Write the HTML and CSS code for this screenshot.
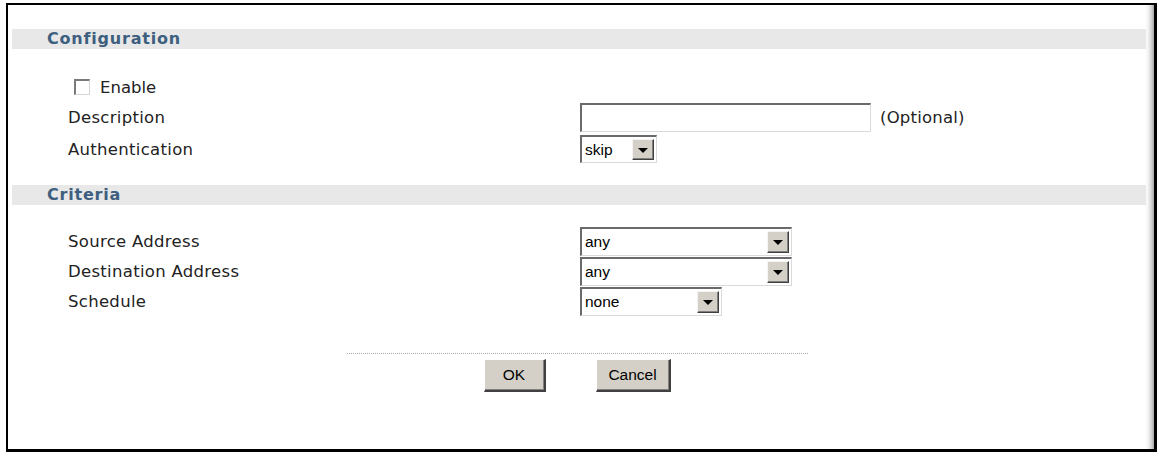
FILE: index.html
```html
<!DOCTYPE html>
<html lang="en">
<head>
<meta charset="utf-8">
<title>Configuration</title>
<link rel="stylesheet" href="styles.css">
</head>
<body>
<div class="frame">
  <div class="bar">Configuration</div>
  <div class="rows rows-config">
    <div class="row row-enable">
      <label class="check"><input type="checkbox" class="checkbox"><span>Enable</span></label>
    </div>
    <div class="row">
      <span class="label">Description</span>
      <div class="control">
        <input type="text" class="textbox">
        <span class="hint">(Optional)</span>
      </div>
    </div>
    <div class="row row-auth">
      <span class="label">Authentication</span>
      <div class="control">
        <div class="select select-skip"><span class="value">skip</span><span class="arrow"></span></div>
      </div>
    </div>
  </div>

  <div class="bar bar-criteria">Criteria</div>
  <div class="rows rows-criteria">
    <div class="row">
      <span class="label">Source Address</span>
      <div class="control">
        <div class="select select-wide"><span class="value">any</span><span class="arrow"></span></div>
      </div>
    </div>
    <div class="row">
      <span class="label">Destination Address</span>
      <div class="control">
        <div class="select select-wide"><span class="value">any</span><span class="arrow"></span></div>
      </div>
    </div>
    <div class="row">
      <span class="label">Schedule</span>
      <div class="control">
        <div class="select select-mid"><span class="value">none</span><span class="arrow"></span></div>
      </div>
    </div>
  </div>

  <div class="actions">
    <div class="divider"></div>
    <div class="buttons">
      <button class="btn btn-ok" type="button">OK</button>
      <button class="btn btn-cancel" type="button">Cancel</button>
    </div>
  </div>
</div>
</body>
</html>
```

FILE: styles.css
```css
* { box-sizing: border-box; }

html, body {
  margin: 0;
  padding: 0;
  background: #ffffff;
}

body {
  font-family: "DejaVu Sans", Verdana, sans-serif;
  font-size: 16.5px;
  color: #222222;
}

.frame {
  margin: 3px 0 0 6px;
  width: 1151px;
  height: 449px;
  border-style: solid;
  border-color: #000000;
  border-width: 2px 3px 3px 2px;
  background: linear-gradient(to left, #a8a8a8 0, #d6d6d6 3px, #f4f4f4 6px, #ffffff 9px);
  padding: 24px 0 0 0;
  display: flex;
  flex-direction: column;
}

.bar {
  margin: 0 8px 0 4px;
  height: 20px;
  line-height: 20px;
  background: #e7e8e7;
  padding-left: 35px;
  font-weight: bold;
  font-size: 16px;
  letter-spacing: 0.8px;
  color: #3e5f7f;
}

.bar-criteria {
  margin-top: 19px;
}

.rows {
  display: flex;
  flex-direction: column;
  padding-left: 60px;
  letter-spacing: 0.3px;
}

.rows-config { margin-top: 23px; }
.rows-criteria { margin-top: 21px; }

.row {
  display: grid;
  grid-template-columns: 512px auto;
  align-items: center;
  height: 30px;
}

.row-auth { height: 34px; }

.row-enable { display: flex; }

.check {
  display: flex;
  align-items: center;
  padding-left: 6px;
  gap: 10px;
  letter-spacing: 0;
}

.checkbox {
  appearance: none;
  -webkit-appearance: none;
  margin: 0;
  width: 16px;
  height: 16px;
  background: #ffffff;
  border-style: solid;
  border-width: 2px 1px 1px 2px;
  border-color: #7a7a7a #d6d6d6 #d6d6d6 #7a7a7a;
}

.control {
  display: flex;
  align-items: center;
}

.textbox {
  margin: 0;
  width: 291px;
  height: 29px;
  border-style: solid;
  border-width: 2px 1px 1px 2px;
  border-color: #6a6a6a #dadada #dadada #6a6a6a;
  background: #ffffff;
  padding: 0 3px;
}

.hint {
  margin-left: 9px;
  letter-spacing: 0.2px;
}

.select {
  display: flex;
  align-items: center;
  height: 29px;
  border-style: solid;
  border-width: 2px 1px 1px 2px;
  border-color: #6a6a6a #dadada #dadada #6a6a6a;
  background: #ffffff;
  padding: 2px;
  font-family: "Liberation Sans", Arial, sans-serif;
  font-size: 15.5px;
  letter-spacing: 0;
  color: #000000;
}

.select-skip { width: 77px; height: 28px; }
.select-wide { width: 212px; }
.select-mid { width: 142px; }

.value {
  flex: 1;
  padding-left: 1px;
  line-height: 1;
}

.arrow {
  width: 22px;
  height: 100%;
  background: #d4d0c8;
  border-style: solid;
  border-width: 1px;
  border-color: #f4f4f4 #404040 #404040 #f4f4f4;
  box-shadow: inset -1px -1px 0 #808080;
  display: flex;
  align-items: center;
  justify-content: center;
}

.arrow::before {
  content: "";
  width: 0;
  height: 0;
  border-left: 5px solid transparent;
  border-right: 5px solid transparent;
  border-top: 5px solid #000000;
  margin-top: 1px;
}

.actions {
  margin-top: 37px;
  padding-right: 8px;
  display: flex;
  flex-direction: column;
  align-items: center;
}

.divider {
  width: 461px;
  border-top: 1px dotted #a8a8a8;
}

.buttons {
  margin-top: 5px;
  display: flex;
  gap: 50px;
}

.btn {
  margin: 0;
  height: 33px;
  padding: 0;
  background: #d4d0c8;
  border-style: solid;
  border-width: 1px 2px 2px 1px;
  border-color: #ffffff #404040 #404040 #ffffff;
  box-shadow: inset -1px -1px 0 #808080;
  font-family: "Liberation Sans", Arial, sans-serif;
  font-size: 15.5px;
  color: #000000;
}

.btn-ok { width: 62px; }
.btn-cancel { width: 75px; }
```
